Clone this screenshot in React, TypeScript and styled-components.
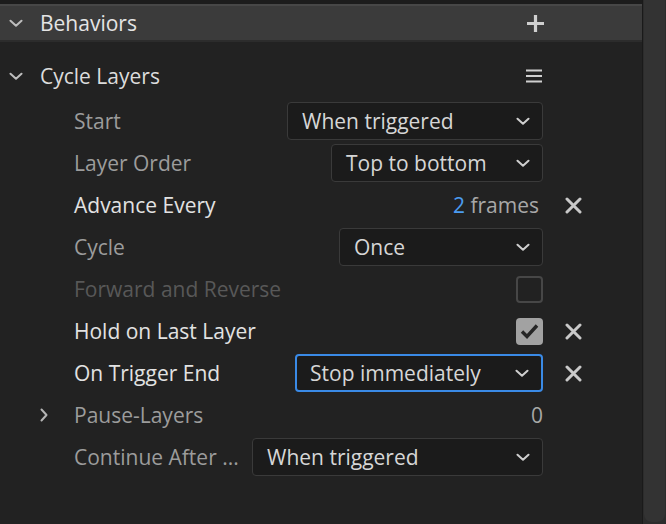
import styled, { createGlobalStyle } from "styled-components";

const Global = createGlobalStyle`
  html, body {
    margin: 0;
    padding: 0;
    background: #222222;
  }
  body {
    font-family: "Open Sans", "Noto Sans", sans-serif;
    -webkit-font-smoothing: antialiased;
  }
  * {
    box-sizing: border-box;
  }
`;

const Frame = styled.div`
  display: flex;
  width: 666px;
  height: 524px;
  overflow: hidden;
  background: #222222;
`;

const Panel = styled.div`
  flex: 1;
  display: flex;
  flex-direction: column;
  border-right: 1px solid #1a1a1a;
`;

const TopStrip = styled.div`
  height: 4px;
  background: #1c1c1c;
`;

const Header = styled.div`
  height: 38px;
  display: flex;
  align-items: center;
  background: #3b3b3b;
  border-top: 2px solid #474747;
  border-bottom: 2px solid #2c2c2c;
  color: #e4e4e4;
  font-size: 21px;
`;

const SectionHeader = styled.div`
  height: 48px;
  margin-top: 10px;
  display: flex;
  align-items: center;
  color: #dcdcdc;
  font-size: 21px;
`;

const Caret = styled.span`
  width: 40px;
  display: flex;
  align-items: center;
  padding-left: 9px;
  color: #bdbdbd;
`;

const Title = styled.span`
  flex: 1;
`;

const HeadAction = styled.span`
  width: 116px;
  display: flex;
  align-items: center;
  color: #cfcfcf;
`;

const Row = styled.div`
  height: 42px;
  display: flex;
  align-items: center;
  position: relative;
  padding-left: 74px;
`;

const Expander = styled.span`
  position: absolute;
  left: 40px;
  top: 0;
  bottom: 0;
  display: flex;
  align-items: center;
  color: #b5b5b5;
`;

const Label = styled.span<{ $tone: "dim" | "bright" | "off" }>`
  flex: 1;
  font-size: 21px;
  white-space: nowrap;
  color: ${(p) =>
    p.$tone === "bright" ? "#e2e2e2" : p.$tone === "off" ? "#585858" : "#9c9c9c"};
`;

const Control = styled.div`
  display: flex;
  align-items: center;
  justify-content: flex-end;
`;

const Select = styled.div<{ $w: number; $focus?: boolean }>`
  width: ${(p) => p.$w}px;
  height: 38px;
  display: flex;
  align-items: center;
  justify-content: space-between;
  padding: 0 12px 0 ${(p) => (p.$focus ? 13 : 14)}px;
  background: #1b1b1b;
  border: ${(p) => (p.$focus ? "2px solid #3a8ae6" : "1px solid #3a3a3a")};
  border-radius: 4px;
  color: #d6d6d6;
  font-size: 21px;
`;

const Value = styled.span<{ $pad?: number }>`
  font-size: 21px;
  color: #a8a8a8;
  padding-right: ${(p) => p.$pad ?? 4}px;
`;

const Accent = styled.span`
  color: #4b9cf0;
`;

const Checkbox = styled.div<{ $checked?: boolean }>`
  width: 27px;
  height: 27px;
  border-radius: 4px;
  display: flex;
  align-items: center;
  justify-content: center;
  background: ${(p) => (p.$checked ? "#a2a2a2" : "transparent")};
  border: ${(p) => (p.$checked ? "none" : "2px solid #474747")};
`;

const Remove = styled.div`
  width: 99px;
  display: flex;
  align-items: center;
  padding-left: 22px;
  color: #c9c9c9;
`;

const Scrollbar = styled.div`
  width: 23px;
  background: #2c2c2c;
  display: flex;
  padding: 0 1px 2px 1px;
`;

const Thumb = styled.div`
  flex: 1;
  background: #333333;
  border-radius: 0 0 8px 8px;
`;

const Arrow = styled.span`
  display: flex;
  color: #cfcfcf;
`;

const ChevronDown = ({ size = 14 }: { size?: number }) => (
  <svg width={size} height={size * 0.6} viewBox="0 0 14 8" fill="none">
    <path d="M1.5 1.5 L7 6.5 L12.5 1.5" stroke="currentColor" strokeWidth="2" strokeLinecap="round" strokeLinejoin="round" />
  </svg>
);

const ChevronRight = () => (
  <svg width="8" height="14" viewBox="0 0 8 14" fill="none">
    <path d="M1.5 1.5 L6.5 7 L1.5 12.5" stroke="currentColor" strokeWidth="2" strokeLinecap="round" strokeLinejoin="round" />
  </svg>
);

const PlusIcon = () => (
  <svg width="19" height="19" viewBox="0 0 19 19">
    <path d="M9.5 1 V18 M1 9.5 H18" stroke="currentColor" strokeWidth="3.2" />
  </svg>
);

const MenuIcon = () => (
  <svg width="16" height="14" viewBox="0 0 16 14">
    <path d="M0 1.5 H16 M0 7 H16 M0 12.5 H16" stroke="currentColor" strokeWidth="1.8" />
  </svg>
);

const CloseIcon = () => (
  <svg width="17" height="17" viewBox="0 0 17 17">
    <path d="M2 2 L15 15 M15 2 L2 15" stroke="currentColor" strokeWidth="3" strokeLinecap="round" />
  </svg>
);

const CheckIcon = () => (
  <svg width="19" height="16" viewBox="0 0 19 16" fill="none">
    <path d="M2 8.5 L7 13.5 L17 2.5" stroke="#262626" strokeWidth="3.4" strokeLinejoin="miter" />
  </svg>
);

const Dropdown = ({ w, text, focus }: { w: number; text: string; focus?: boolean }) => (
  <Select $w={w} $focus={focus}>
    <span>{text}</span>
    <Arrow>
      <ChevronDown />
    </Arrow>
  </Select>
);

export default function App() {
  return (
    <Frame>
      <Global />
      <Panel>
        <TopStrip />
        <Header>
          <Caret>
            <ChevronDown />
          </Caret>
          <Title>Behaviors</Title>
          <HeadAction>
            <PlusIcon />
          </HeadAction>
        </Header>

        <SectionHeader>
          <Caret>
            <ChevronDown />
          </Caret>
          <Title>Cycle Layers</Title>
          <HeadAction>
            <MenuIcon />
          </HeadAction>
        </SectionHeader>

        <Row>
          <Label $tone="dim">Start</Label>
          <Control>
            <Dropdown w={256} text="When triggered" />
          </Control>
          <Remove />
        </Row>
        <Row>
          <Label $tone="dim">Layer Order</Label>
          <Control>
            <Dropdown w={212} text="Top to bottom" />
          </Control>
          <Remove />
        </Row>
        <Row>
          <Label $tone="bright">Advance Every</Label>
          <Control>
            <Value>
              <Accent>2</Accent> frames
            </Value>
          </Control>
          <Remove>
            <CloseIcon />
          </Remove>
        </Row>
        <Row>
          <Label $tone="dim">Cycle</Label>
          <Control>
            <Dropdown w={204} text="Once" />
          </Control>
          <Remove />
        </Row>
        <Row>
          <Label $tone="off">Forward and Reverse</Label>
          <Control>
            <Checkbox />
          </Control>
          <Remove />
        </Row>
        <Row>
          <Label $tone="bright">Hold on Last Layer</Label>
          <Control>
            <Checkbox $checked>
              <CheckIcon />
            </Checkbox>
          </Control>
          <Remove>
            <CloseIcon />
          </Remove>
        </Row>
        <Row>
          <Label $tone="bright">On Trigger End</Label>
          <Control>
            <Dropdown w={248} text="Stop immediately" focus />
          </Control>
          <Remove>
            <CloseIcon />
          </Remove>
        </Row>
        <Row>
          <Expander>
            <ChevronRight />
          </Expander>
          <Label $tone="dim">Pause-Layers</Label>
          <Control>
            <Value $pad={0}>0</Value>
          </Control>
          <Remove />
        </Row>
        <Row>
          <Label $tone="dim">Continue After ...</Label>
          <Control>
            <Dropdown w={291} text="When triggered" />
          </Control>
          <Remove />
        </Row>
      </Panel>
      <Scrollbar>
        <Thumb />
      </Scrollbar>
    </Frame>
  );
}
